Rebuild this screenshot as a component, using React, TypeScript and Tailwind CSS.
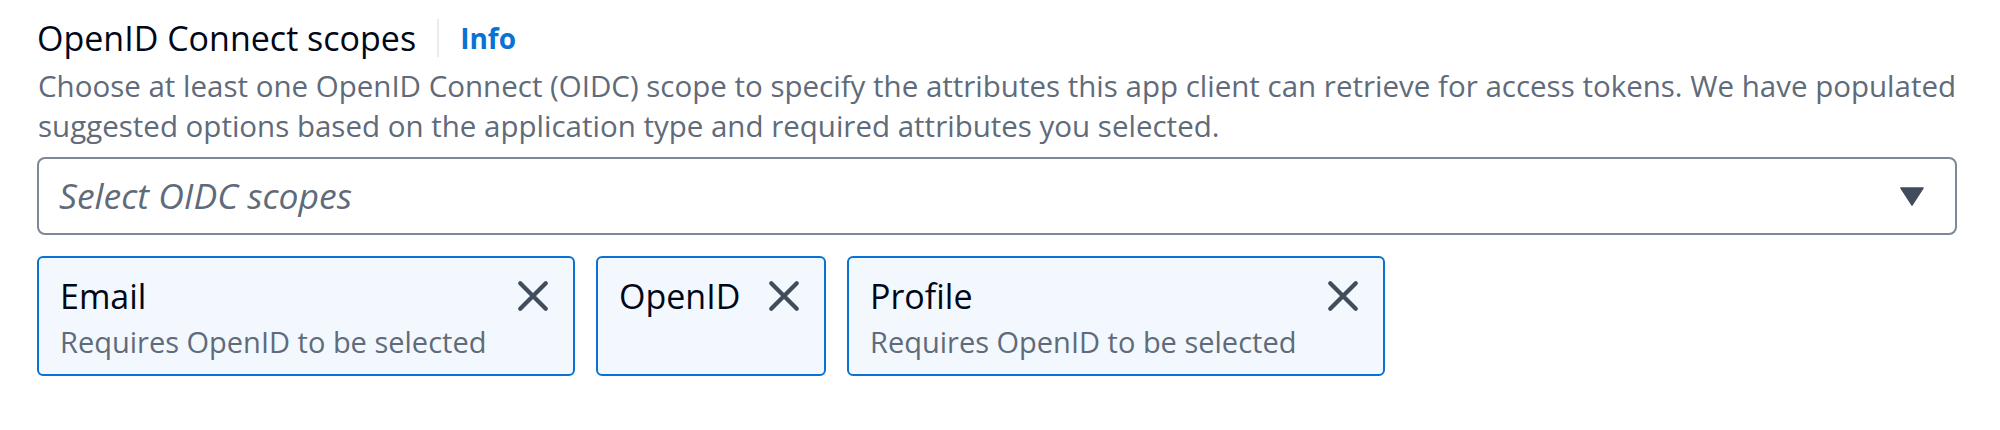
import React from "react";

const font = { fontFamily: '"Open Sans", "Noto Sans", sans-serif' };

function CloseIcon() {
  return (
    <svg width="34" height="34" viewBox="0 0 16 16" fill="none">
      <path d="M2 2l12 12M14 2L2 14" stroke="#414d5c" strokeWidth="2" strokeLinecap="round" />
    </svg>
  );
}

function Chip({ title, desc, width }: { title: string; desc?: string; width: string }) {
  return (
    <div className={`flex ${width} h-[120px] items-start justify-between rounded-[6px] border-2 border-[#0972d3] bg-[#f2f8fd] pl-[21px] pr-[23px] pt-[18px]`}>
      <div className="flex flex-col">
        <span className="text-[34px] leading-[40px] text-[#000716]">{title}</span>
        {desc && <span className="mt-[8px] text-[29px] leading-[36px] text-[#5f6b7a]">{desc}</span>}
      </div>
      <div className="mt-[3px] flex h-[34px] w-[34px] items-center justify-center">
        <CloseIcon />
      </div>
    </div>
  );
}

export default function App() {
  return (
    <div className="h-[430px] w-[2000px] bg-white" style={font}>
      <div className="w-[1958px] pl-[37px] pt-[16px]">
        <div className="flex h-[44px] items-center">
          <span className="text-[34px] leading-[44px] text-[#000716]">OpenID Connect scopes</span>
          <span className="ml-[21px] h-[38px] w-[2px] bg-[#e9ebed]" />
          <span className="ml-[21px] text-[28px] font-bold leading-[44px] text-[#0972d3]">Info</span>
        </div>
        <p className="mt-[6px] pl-[1px] text-[29.5px] leading-[40px] text-[#5f6b7a]">
          <span className="block whitespace-nowrap">
            Choose at least one OpenID Connect (OIDC) scope to specify the attributes this app client can retrieve for access tokens. We have populated
          </span>
          <span className="block whitespace-nowrap">
            suggested options based on the application type and required attributes you selected.
          </span>
        </p>
        <div className="mt-[11px] flex h-[78px] w-[1920px] items-center justify-between rounded-[8px] border-2 border-[#7d8998] pl-[20px] pr-[31px]">
          <span className="text-[35.5px] italic text-[#5f6b7a]">Select OIDC scopes</span>
          <svg width="24" height="19" viewBox="0 0 24 19">
            <path d="M1 1h22L12 18z" fill="#414d5c" stroke="#414d5c" strokeWidth="1.5" strokeLinejoin="round" />
          </svg>
        </div>
        <div className="mt-[21px] flex gap-[21px]">
          <Chip title="Email" desc="Requires OpenID to be selected" width="w-[538px]" />
          <Chip title="OpenID" width="w-[230px]" />
          <Chip title="Profile" desc="Requires OpenID to be selected" width="w-[538px]" />
        </div>
      </div>
    </div>
  );
}
